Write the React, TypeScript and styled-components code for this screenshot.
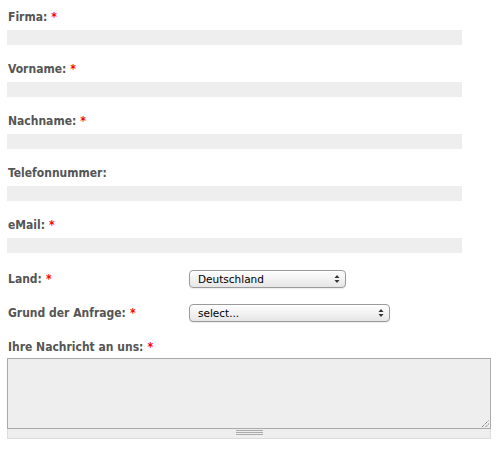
import React from 'react';
import { styled, createGlobalStyle } from 'styled-components';

const GlobalStyle = createGlobalStyle`
  html, body {
    margin: 0;
    padding: 0;
    background: #fff;
  }
  body {
    font-family: "DejaVu Sans", Verdana, sans-serif;
  }
`;

const Form = styled.form`
  padding: 10px 8px 0 7px;
  width: 484px;
`;

const Field = styled.div`
  display: flex;
  flex-direction: column;
  gap: 5px;
  margin-bottom: 17px;
`;

const Label = styled.label`
  display: block;
  margin-left: 1px;
  font-family: "DejaVu Sans Condensed", "DejaVu Sans", Verdana, sans-serif;
  font-stretch: condensed;
  font-size: 12px;
  line-height: 15px;
  font-weight: bold;
  color: #555;
  white-space: nowrap;
`;

const Required = styled.span`
  color: #f00;
  margin-left: 4px;
`;

const TextInput = styled.input`
  box-sizing: border-box;
  width: 455px;
  height: 15px;
  margin: 0;
  padding: 0 4px;
  border: none;
  background: #eee;
  font: 11px "DejaVu Sans", Verdana, sans-serif;
  outline: none;
`;

const SelectRow = styled.div`
  display: flex;
  align-items: center;
  margin-bottom: 16px;
`;

const SelectLabel = styled(Label)`
  width: 181px;
  flex: none;
`;

const SelectWrap = styled.div<{ $width: number }>`
  position: relative;
  width: ${(p) => p.$width}px;
  height: 18px;
`;

const Select = styled.select`
  appearance: none;
  display: block;
  box-sizing: border-box;
  width: 100%;
  height: 18px;
  margin: 0;
  padding: 0 20px 0 8px;
  border: 1px solid #9a9a9a;
  border-radius: 4px;
  background: linear-gradient(#fefefe, #f1f1f1 55%, #e6e6e6);
  box-shadow: inset 0 1px 0 #fff, 0 1px 1px rgba(0, 0, 0, 0.08);
  color: #000;
  font-family: "DejaVu Sans", Verdana, sans-serif;
  font-size: 10.5px;
  line-height: 16px;
  outline: none;
`;

const Arrows = styled.svg`
  position: absolute;
  right: 6px;
  top: 5px;
  pointer-events: none;
`;

const MessageField = styled.div`
  display: flex;
  flex-direction: column;
  gap: 3px;
  margin-top: 18px;
`;

const AreaBox = styled.div`
  position: relative;
  width: 484px;
`;

const TextArea = styled.textarea`
  display: block;
  box-sizing: border-box;
  width: 484px;
  height: 71px;
  margin: 0;
  padding: 4px;
  border: 1px solid #aaa;
  background: #eee;
  resize: none;
  font: 11px "DejaVu Sans", Verdana, sans-serif;
  outline: none;
`;

const Grip = styled.svg`
  position: absolute;
  right: 2px;
  bottom: 2px;
  pointer-events: none;
`;

const Grabber = styled.div`
  box-sizing: border-box;
  height: 10px;
  border: 1px solid #ddd;
  border-top: none;
  background: #eee;
  display: flex;
  justify-content: center;
  padding-top: 1px;
`;

const GrabLines = styled.div`
  width: 27px;
  height: 5px;
  border-top: 1px solid #aaa;
  border-bottom: 1px solid #aaa;
  box-sizing: border-box;
  position: relative;
  &::after {
    content: '';
    position: absolute;
    left: 0;
    right: 0;
    top: 1px;
    border-top: 1px solid #aaa;
  }
`;

const textFields = [
  { name: 'firma', label: 'Firma:', required: true },
  { name: 'vorname', label: 'Vorname:', required: true },
  { name: 'nachname', label: 'Nachname:', required: true },
  { name: 'telefon', label: 'Telefonnummer:', required: false },
  { name: 'email', label: 'eMail:', required: true },
];

const SelectArrows = () => (
  <Arrows width="6" height="8" viewBox="0 0 6 8">
    <path d="M3 0 L5.5 3 L0.5 3 Z" fill="#333" />
    <path d="M3 8 L5.5 5 L0.5 5 Z" fill="#333" />
  </Arrows>
);

const App: React.FC = () => (
  <>
    <GlobalStyle />
    <Form onSubmit={(e) => e.preventDefault()}>
      {textFields.map((f) => (
        <Field key={f.name}>
          <Label htmlFor={f.name}>
            {f.label}
            {f.required && <Required>*</Required>}
          </Label>
          <TextInput id={f.name} type="text" />
        </Field>
      ))}

      <SelectRow>
        <SelectLabel htmlFor="land">
          Land:<Required>*</Required>
        </SelectLabel>
        <SelectWrap $width={157}>
          <Select id="land" defaultValue="de">
            <option value="de">Deutschland</option>
            <option value="at">Österreich</option>
            <option value="ch">Schweiz</option>
          </Select>
          <SelectArrows />
        </SelectWrap>
      </SelectRow>

      <SelectRow>
        <SelectLabel htmlFor="grund">
          Grund der Anfrage:<Required>*</Required>
        </SelectLabel>
        <SelectWrap $width={201}>
          <Select id="grund" defaultValue="">
            <option value="">select...</option>
            <option value="info">Information</option>
            <option value="angebot">Angebot</option>
          </Select>
          <SelectArrows />
        </SelectWrap>
      </SelectRow>

      <MessageField>
        <Label htmlFor="nachricht">
          Ihre Nachricht an uns:<Required>*</Required>
        </Label>
        <div>
          <AreaBox>
            <TextArea id="nachricht" />
            <Grip width="8" height="8" viewBox="0 0 8 8">
              <path d="M1 8 L8 1 M4.5 8 L8 4.5" stroke="#555" strokeWidth="1" strokeDasharray="1 1" />
            </Grip>
          </AreaBox>
          <Grabber>
            <GrabLines />
          </Grabber>
        </div>
      </MessageField>
    </Form>
  </>
);

export default App;
